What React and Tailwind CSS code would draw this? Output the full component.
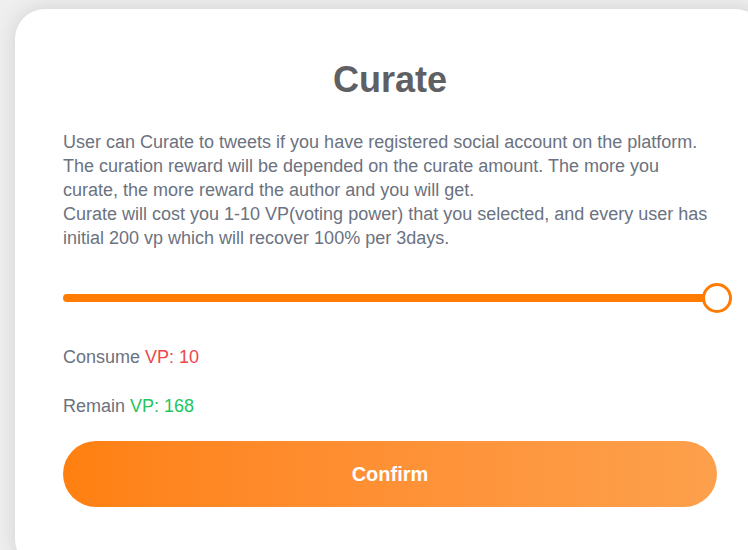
import React from "react";

const CurateModal = () => {
  const vp = 10;
  const remain = 168;

  return (
    <div className="w-[750px] h-[560px] ml-[15px] mt-[9px] rounded-[30px] bg-white shadow-[0_0_22px_rgba(0,0,0,0.13)] px-12 pt-[51px]">
      <h1 className="text-center text-[36px] leading-10 font-bold text-[#5f6064]">Curate</h1>
      <p className="mt-[30px] text-[18px] leading-6 text-[#6b7280]">
        User can Curate to tweets if you have registered social account on the platform.
        <br />
        The curation reward will be depended on the curate amount. The more you
        <br />
        curate, the more reward the author and you will get.
        <br />
        Curate will cost you 1-10 VP(voting power) that you selected, and every user has
        <br />
        initial 200 vp which will recover 100% per 3days.
      </p>

      {/* slider */}
      <div className="relative mt-[33px] h-[30px] flex items-center">
        <div className="h-2 w-full rounded-full bg-[#ff7b02]" />
        <div className="absolute right-[-15px] top-0 w-[30px] h-[30px] rounded-full border-[3px] border-[#ff7b02] bg-white" />
      </div>

      <div className="mt-[32px] text-[18px] leading-6 text-[#6b7280]">
        Consume <span className="text-[#f0454a]">VP: {vp}</span>
      </div>
      <div className="mt-[25px] text-[18px] leading-6 text-[#6b7280]">
        Remain <span className="text-[#22c55e]">VP: {remain}</span>
      </div>

      <button className="mt-[23px] w-full h-[66px] rounded-full bg-linear-to-r from-[#ff8010] to-[#fda04c] text-white text-xl font-bold">
        Confirm
      </button>
    </div>
  );
};

export default function App() {
  return (
    <div
      className="w-[748px] h-[550px] overflow-hidden bg-[#efefef]"
      style={{ fontFamily: '"Liberation Sans", Arial, sans-serif' }}
    >
      <CurateModal />
    </div>
  );
}
